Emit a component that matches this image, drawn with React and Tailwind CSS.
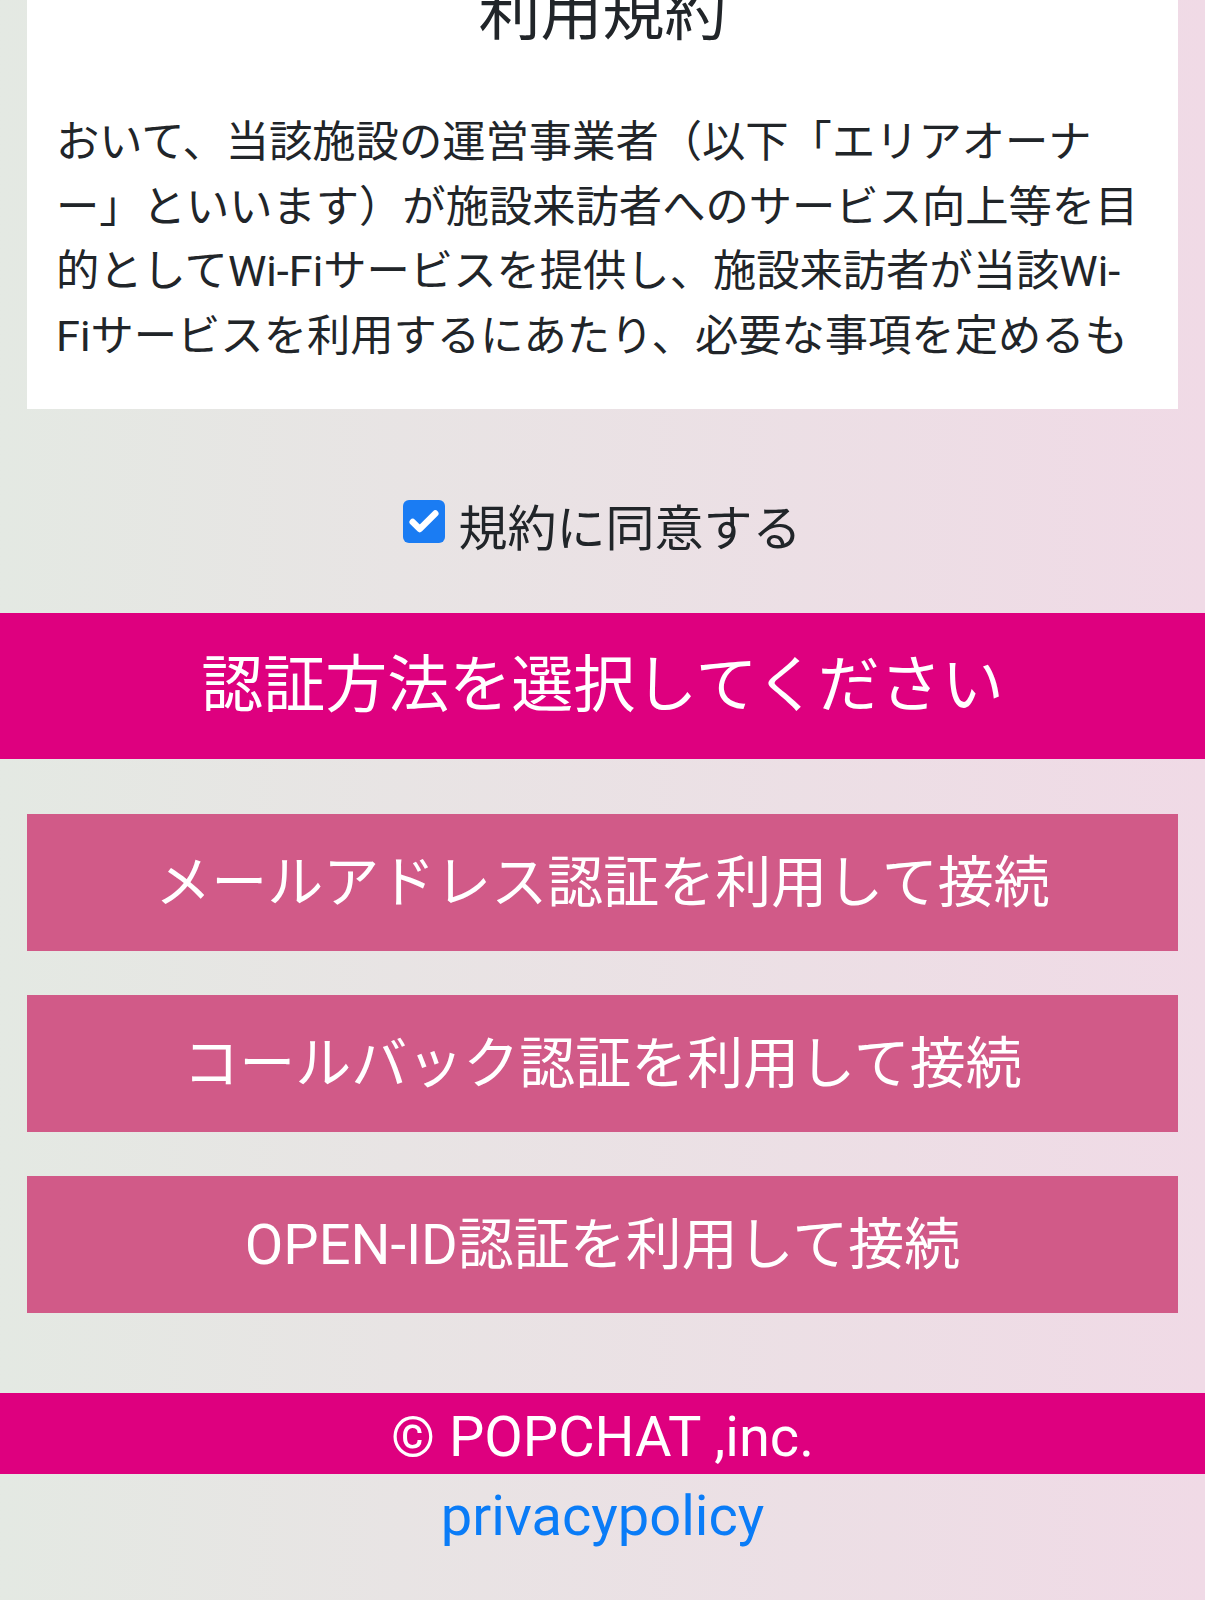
import { Check } from "lucide-react";

const terms =
  "おいて、当該施設の運営事業者（以下「エリアオーナー」といいます）が施設来訪者へのサービス向上等を目的としてWi-Fiサービスを提供し、施設来訪者が当該Wi-Fiサービスを利用するにあたり、必要な事項を定めるものです。本規約に同意いただいた方のみ、本サービスをご利用いただけます。";

const methods = [
  "メールアドレス認証を利用して接続",
  "コールバック認証を利用して接続",
  "OPEN-ID認証を利用して接続",
];

export default function App() {
  return (
    <div className="min-h-[1600px] overflow-hidden bg-linear-to-r from-[#e4e9e3] to-[#f0dae6] font-['Roboto','Noto_Sans_CJK_JP',sans-serif] text-[#212529]">
      {/* terms card */}
      <div className="mx-[27px] flex flex-col bg-white pb-[37px]">
        <h2 className="-mt-[17px] text-center text-[62px] leading-none font-normal">
          利用規約
        </h2>
        <div className="mt-[52px] h-[275px] overflow-hidden pt-[14px] pl-[29px] pr-[34px]">
          <p className="text-[43.3px] leading-[64.5px]">{terms}</p>
        </div>
      </div>

      {/* agree */}
      <label className="mt-[80px] flex items-center justify-center gap-[13px]">
        <span className="flex h-[43px] w-[42px] items-center justify-center rounded-[6px] bg-[#1a7cf3]">
          <Check size={34} strokeWidth={4.5} className="text-white" />
        </span>
        <span className="pt-[16px] text-[49px] leading-none">規約に同意する</span>
      </label>

      {/* section header */}
      <div className="mt-[59px] flex h-[146px] items-center justify-center bg-[#de007f]">
        <span className="text-[62px] leading-none text-white">認証方法を選択してください</span>
      </div>

      {/* methods */}
      <div className="mx-[27px] mt-[55px] flex flex-col gap-[44px]">
        {methods.map((m) => (
          <button
            key={m}
            className="flex h-[137px] items-center justify-center bg-[#d15a88] text-[56px] leading-none text-white"
          >
            {m}
          </button>
        ))}
      </div>

      {/* footer */}
      <div className="mt-[80px] flex h-[81px] items-center justify-center bg-[#de007f] pt-[6px]">
        <span className="text-[56px] leading-none text-white">© POPCHAT ,inc.</span>
      </div>
      <div className="mt-[14px] text-center">
        <a href="#" className="text-[56px] leading-none text-[#0a7cf7]">
          privacypolicy
        </a>
      </div>
    </div>
  );
}
